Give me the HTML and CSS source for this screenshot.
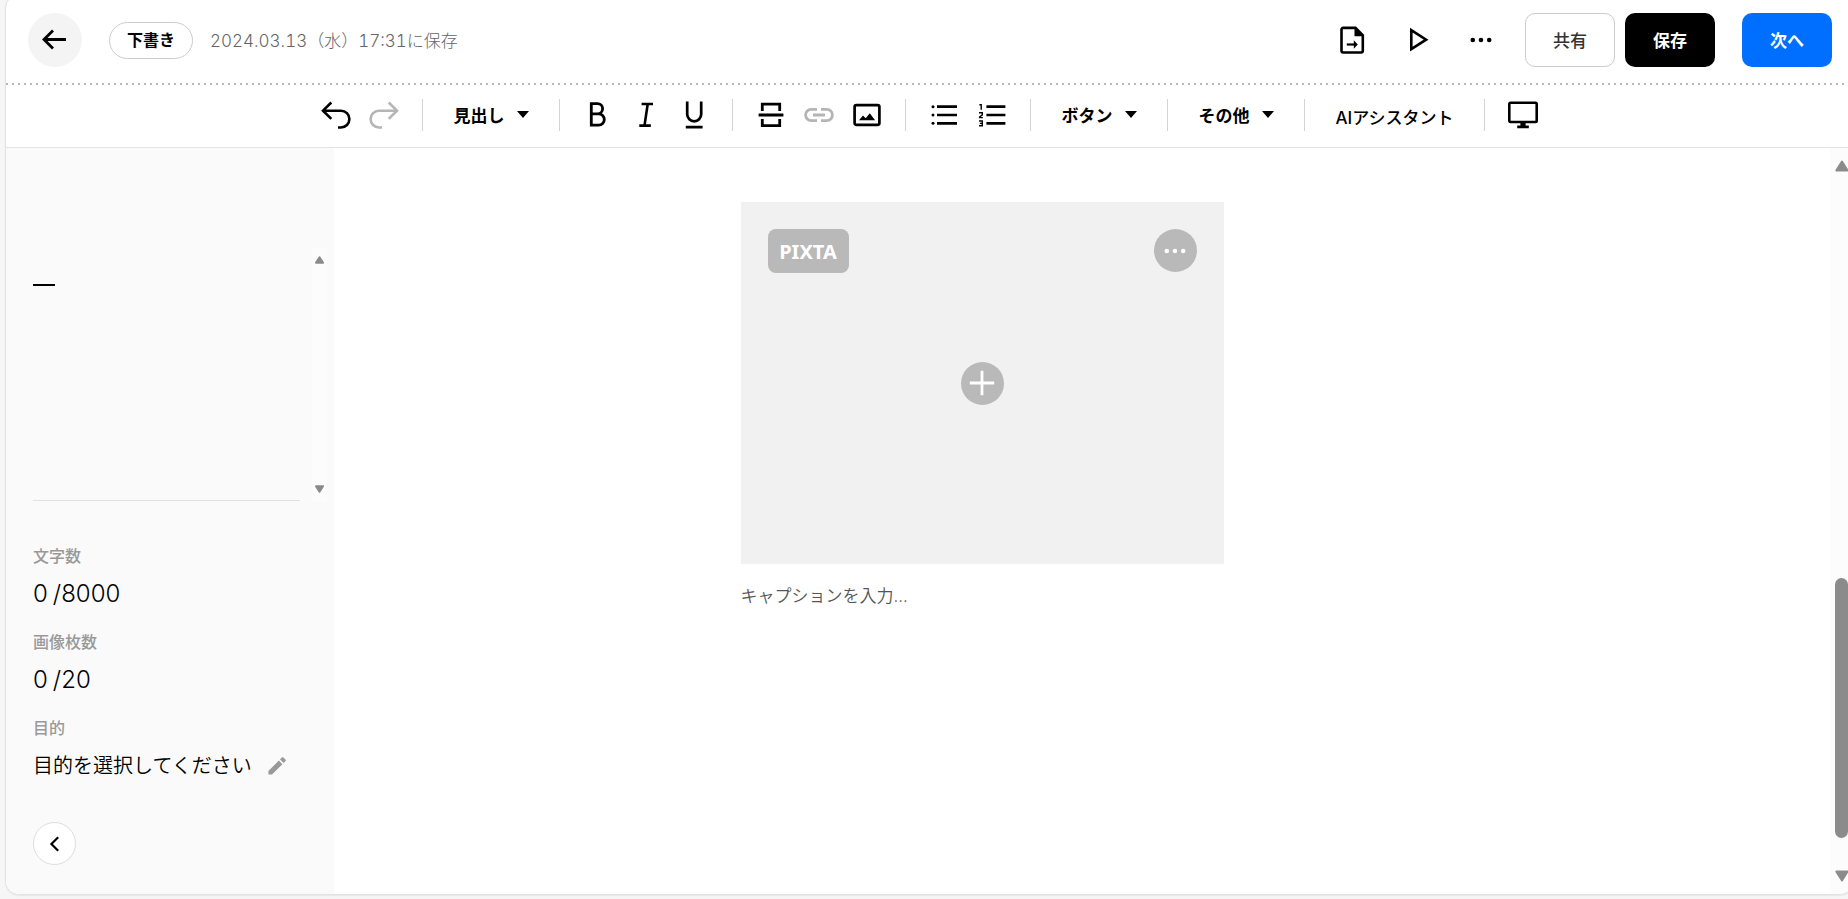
FILE: index.html
```html
<!DOCTYPE html>
<html lang="ja">
<head>
<meta charset="utf-8">
<meta name="viewport" content="width=device-width, initial-scale=1">
<title>記事の編集</title>
<link rel="stylesheet" href="styles.css">
</head>
<body>
<div class="shell">
  <header class="header">
    <button class="back" type="button" aria-label="戻る">
      <svg width="30" height="30" viewBox="0 0 30 30" fill="none" stroke="currentColor" stroke-width="2.8"><path d="M26 14.5H4.5M13 5.5l-9 9 9 9"/></svg>
    </button>
    <span class="status">下書き</span>
    <span class="saved">2024.03.13（水）17:31に保存</span>
    <div class="header-icons">
      <button class="icon" type="button" aria-label="書き出し">
        <svg width="30" height="30" viewBox="0 0 30 30"><path d="M6.2 2.9h12.3l7.3 7.3v15.6q0 1.7-1.7 1.7H6.2q-1.7 0-1.7-1.7V4.6q0-1.7 1.7-1.7z" fill="none" stroke="currentColor" stroke-width="2.6"/><path d="M17.5 2.5v8.8h8.8z" fill="currentColor"/><path d="M9.8 19.5h9" stroke="currentColor" stroke-width="2.2"/><path d="M16.8 15.2l4 4.3-4 4.3z" fill="currentColor"/></svg>
      </button>
      <button class="icon" type="button" aria-label="プレビュー">
        <svg width="30" height="30" viewBox="0 0 30 30" fill="none" stroke="currentColor" stroke-width="2.6"><path d="M8.3 5.2v19L23.1 14.7z"/></svg>
      </button>
      <button class="icon icon-dots" type="button" aria-label="メニュー">
        <svg width="24" height="30" viewBox="0 0 24 30" fill="currentColor"><circle cx="3.8" cy="15" r="2.3"/><circle cx="12" cy="15" r="2.3"/><circle cx="20.2" cy="15" r="2.3"/></svg>
      </button>
    </div>
    <div class="actions">
      <button class="btn btn-outline" type="button">共有</button>
      <button class="btn btn-dark" type="button">保存</button>
    </div>
    <button class="btn btn-blue" type="button">次へ</button>
  </header>

  <div class="toolbar" role="toolbar">
    <div class="group">
      <button class="icon" type="button" aria-label="元に戻す">
        <svg width="30" height="30" viewBox="0 0 30 30" fill="none" stroke="currentColor" stroke-width="2.6"><path d="M2 10.7h18a8.4 8.4 0 0 1 0 16.8h-3M10.3 2.5L2 10.7l8.3 8.2"/></svg>
      </button>
      <button class="icon muted" type="button" aria-label="やり直す">
        <svg width="30" height="30" viewBox="0 0 30 30" fill="none" stroke="currentColor" stroke-width="2.6"><path d="M28 10.7H10a8.4 8.4 0 0 0 0 16.8h3M19.7 2.5l8.3 8.2-8.3 8.2"/></svg>
      </button>
    </div>
    <div class="group group-text">
      <button class="menu" type="button">見出し<span class="caret"></span></button>
    </div>
    <div class="group">
      <button class="icon" type="button" aria-label="太字">
        <svg width="30" height="30" viewBox="0 0 30 30" fill="none" stroke="currentColor" stroke-width="2.8"><path d="M8.3 3.6h6.2a5 5 0 0 1 0 10.2H8.3zM8.3 13.8h7.3a5.6 5.6 0 0 1 0 11.4H8.3z"/></svg>
      </button>
      <button class="icon" type="button" aria-label="斜体">
        <svg width="30" height="30" viewBox="0 0 30 30" fill="none" stroke="currentColor" stroke-width="2.6"><path d="M10.6 4H22M8.3 25.6h11.5M16.7 4l-3.2 21.6"/></svg>
      </button>
      <button class="icon" type="button" aria-label="下線">
        <svg width="30" height="30" viewBox="0 0 30 30" fill="none" stroke="currentColor" stroke-width="2.7"><path d="M8.2 1.5v12.8a7 7 0 0 0 14 0V1.5M6.8 27.2h16.8"/></svg>
      </button>
    </div>
    <div class="group">
      <button class="icon" type="button" aria-label="区切り線">
        <svg width="30" height="30" viewBox="0 0 30 30" fill="none" stroke="currentColor" stroke-width="2.8"><path d="M6.3 11V4.2h17.4V11M2.6 15h24.8M6.3 19v6.6h17.4V19"/></svg>
      </button>
      <button class="icon muted" type="button" aria-label="リンク">
        <svg width="30" height="30" viewBox="0 0 30 30" fill="none" stroke="currentColor" stroke-width="2.8"><path d="M13 9.4H7.2a5.6 5.6 0 0 0 0 11.2H13M17 9.4h5.8a5.6 5.6 0 0 1 0 11.2H17M9 15h12"/></svg>
      </button>
      <button class="icon" type="button" aria-label="画像">
        <svg width="30" height="30" viewBox="0 0 30 30"><rect x="2.6" y="5.2" width="24.8" height="19.6" rx="1.8" fill="none" stroke="currentColor" stroke-width="2.7"/><path d="M7 20.2l4-4.7 2.7 2.8 4.1-5 5.2 6.9z" fill="currentColor"/></svg>
      </button>
    </div>
    <div class="group">
      <button class="icon" type="button" aria-label="箇条書き">
        <svg width="30" height="30" viewBox="0 0 30 30"><path d="M8 6.7h20M8 15h20M8 23.3h20" stroke="currentColor" stroke-width="2.7"/><circle cx="4" cy="6.7" r="1.5"/><circle cx="4" cy="15" r="1.5"/><circle cx="4" cy="23.3" r="1.5"/></svg>
      </button>
      <button class="icon" type="button" aria-label="番号付きリスト">
        <svg width="30" height="30" viewBox="0 0 30 30"><path d="M9.4 6.7h19M9.4 15h19M9.4 23.3h19" stroke="currentColor" stroke-width="2.7"/><path d="M2.4 4.8h1.8v5M2 12.8h3.3v2.1L2.6 17v.6h3.2M2 21h3.3v4.8H2M2.8 23.4h2.4" fill="none" stroke="currentColor" stroke-width="1.4"/></svg>
      </button>
    </div>
    <div class="group group-text">
      <button class="menu" type="button">ボタン<span class="caret"></span></button>
    </div>
    <div class="group group-text">
      <button class="menu" type="button">その他<span class="caret"></span></button>
    </div>
    <div class="group group-text">
      <button class="menu assistant" type="button">AIアシスタント</button>
    </div>
    <div class="group">
      <button class="icon" type="button" aria-label="画面表示">
        <svg width="30" height="30" viewBox="0 0 30 30"><rect x="1.3" y="2.8" width="27.4" height="19.2" rx="1.2" fill="none" stroke="currentColor" stroke-width="2.6"/><path d="M12.4 22h5.2v3.6h3.2v2.6H9.2v-2.6h3.2z" fill="currentColor"/></svg>
      </button>
    </div>
  </div>

  <div class="body">
    <aside class="sidebar">
      <div class="outline">
        <div class="outline-list"><span class="outline-mark"></span></div>
        <div class="mini-scroll">
          <svg width="9" height="8" viewBox="0 0 9 8"><path d="M4.5 1.2L8 6.8H1z"/></svg>
          <svg width="9" height="8" viewBox="0 0 9 8"><path d="M4.5 6.8L8 1.2H1z"/></svg>
        </div>
      </div>
      <dl class="stats">
        <div><dt>文字数</dt><dd><span>0</span><span>/8000</span></dd></div>
        <div><dt>画像枚数</dt><dd><span>0</span><span>/20</span></dd></div>
        <div>
          <dt>目的</dt>
          <dd class="purpose">目的を選択してください
            <button class="edit" type="button" aria-label="目的を編集">
              <svg width="18" height="18" viewBox="0 0 18 18" fill="currentColor"><path d="M.4 14L10.8 3.6l3.6 3.6L4 17.6H.4zM12 2.4L13.8.6q.8-.8 1.6 0l2 2q.8.8 0 1.6L15.6 6z"/></svg>
            </button>
          </dd>
        </div>
      </dl>
      <button class="collapse" type="button" aria-label="サイドバーを閉じる">
        <svg width="18" height="18" viewBox="0 0 18 18" fill="none" stroke="currentColor" stroke-width="2.2"><path d="M12.2 2.2L5.4 9l6.8 6.8"/></svg>
      </button>
    </aside>

    <main class="canvas">
      <div class="article">
        <figure class="figure">
          <div class="drop">
            <div class="drop-top">
              <button class="pixta" type="button">PIXTA</button>
              <button class="round" type="button" aria-label="画像メニュー">
                <svg width="24" height="24" viewBox="0 0 24 24" fill="currentColor"><circle cx="3.8" cy="12" r="2.3"/><circle cx="12" cy="12" r="2.3"/><circle cx="20.2" cy="12" r="2.3"/></svg>
              </button>
            </div>
            <button class="round" type="button" aria-label="画像を追加">
              <svg width="26" height="26" viewBox="0 0 26 26" fill="none" stroke="currentColor" stroke-width="2.8"><path d="M13 .8v24.4M.8 13h24.4"/></svg>
            </button>
          </div>
          <figcaption><input class="caption" type="text" placeholder="キャプションを入力..." aria-label="キャプション"></figcaption>
        </figure>
      </div>
    </main>

    <div class="scroll">
      <svg width="14" height="12" viewBox="0 0 14 12"><path d="M7 1.6L12.6 10.4H1.4z"/></svg>
      <div class="scroll-track"><div class="scroll-thumb"></div></div>
      <svg width="14" height="12" viewBox="0 0 14 12"><path d="M7 10.4L12.6 1.6H1.4z"/></svg>
    </div>
  </div>
</div>
</body>
</html>
```

FILE: styles.css
```css
* {
  box-sizing: border-box;
}

body {
  display: flex;
  min-height: 100vh;
  margin: 0;
  overflow: hidden;
  background: #f6f6f6;
  color: #000;
  font-family: Inter, "Noto Sans CJK JP", sans-serif;
  font-size: 16px;
}

button {
  padding: 0;
  border: 0;
  background: none;
  color: inherit;
  font: inherit;
}

svg {
  display: block;
}

.shell {
  display: flex;
  flex: 1;
  flex-direction: column;
  margin: -6px -6px 4px 5px;
  overflow: hidden;
  border: 1px solid #e2e2e2;
  border-radius: 14px;
  background: #fff;
  box-shadow: 0 1px 1px #e8e8e8;
}

/* Header */

.header {
  display: flex;
  align-items: center;
  padding: 18px 21px 18px 22px;
  background: repeating-linear-gradient(90deg, #b8b8b8 0 2px, transparent 2px 6px) left bottom / 100% 2px no-repeat;
}

.back {
  display: grid;
  place-items: center;
  width: 54px;
  height: 54px;
  border-radius: 50%;
  background: #f4f4f4;
}

.status {
  margin-left: 27px;
  padding: 0 17px;
  border: 1px solid #ccc;
  border-radius: 19px;
  font-weight: 700;
  line-height: 35px;
}

.saved {
  margin-left: 17px;
  padding-bottom: 2px;
  color: #666;
  font-size: 17px;
  font-weight: 300;
  font-variant-numeric: tabular-nums;
}

.header-icons {
  display: flex;
  gap: 36px;
  margin-left: auto;
}

.icon {
  display: grid;
  place-items: center;
  width: 30px;
  height: 30px;
}

.icon-dots {
  width: 24px;
}

.muted {
  color: #b5b5b5;
}

.actions {
  display: flex;
  gap: 10px;
  margin: 0 27px 0 32px;
}

.btn {
  width: 90px;
  height: 54px;
  padding-bottom: 2px;
  border-radius: 10px;
  font-size: 17px;
  font-weight: 700;
}

.btn-outline {
  border: 1px solid #ccc;
  color: #333;
  font-weight: 500;
}

.btn-dark {
  background: #000;
  color: #fff;
}

.btn-blue {
  background: #006fff;
  color: #fff;
}

/* Toolbar */

.toolbar {
  display: flex;
  justify-content: center;
  padding: 14px 0 16px;
  border-bottom: 1px solid #e4e4e4;
}

.group {
  display: flex;
  align-items: center;
  gap: 18px;
  height: 32px;
  padding: 0 23px;
}

.group + .group {
  border-left: 1px solid #d4d4d4;
}

.group + .group-text {
  padding: 0 30px;
}

.menu {
  display: flex;
  align-items: center;
  gap: 13px;
  padding-bottom: 2px;
  font-size: 17px;
  font-weight: 700;
}

.assistant {
  padding: 2px 0 0;
  font-weight: 500;
}

.caret {
  border: 6px solid transparent;
  border-top: 7px solid #000;
  border-bottom: 0;
}

/* Sidebar */

.body {
  display: flex;
  flex: 1;
}

.sidebar {
  width: 328px;
  padding: 100px 7px 28px 27px;
  background: #fafafa;
}

.outline {
  display: flex;
  height: 253px;
}

.outline-list {
  flex: 1;
  padding-top: 36px;
  border-bottom: 1px solid #e0e0e0;
}

.outline-mark {
  display: block;
  width: 22px;
  height: 2px;
  background: #000;
}

.mini-scroll {
  display: flex;
  flex-direction: column;
  align-items: center;
  justify-content: space-between;
  width: 15px;
  margin-left: 12px;
  padding: 8px 0;
  background: #fcfcfc;
}

.mini-scroll svg,
.scroll svg {
  fill: #8b8b8b;
  stroke: #8b8b8b;
  stroke-width: 2;
  stroke-linejoin: round;
}

.stats {
  display: grid;
  gap: 18px;
  margin: 43px 0 38px;
}

.stats dt {
  margin-bottom: 8px;
  color: #999;
  font-weight: 500;
  line-height: 24px;
}

.stats dd {
  display: flex;
  gap: 5px;
  margin: 0;
  font-size: 24px;
  font-weight: 300;
  line-height: 36px;
}

.stats .purpose {
  align-items: center;
  gap: 16px;
  font-size: 20px;
  font-weight: 350;
}

.edit {
  color: #999;
}

.collapse {
  display: grid;
  place-items: center;
  width: 43px;
  height: 43px;
  border: 1px solid #ddd;
  border-radius: 50%;
  background: #fff;
}

/* Canvas */

.canvas {
  flex: 1;
  padding-top: 54px;
}

.article {
  max-width: 683px;
  margin: 0 auto;
}

.figure {
  width: 483px;
  margin: 0;
}

.drop {
  display: grid;
  grid-template-rows: 1fr auto 1fr;
  justify-items: center;
  aspect-ratio: 4 / 3;
  padding: 27px;
  background: #f1f1f1;
}

.drop-top {
  display: flex;
  justify-content: space-between;
  justify-self: stretch;
}

.pixta {
  width: 81px;
  height: 44px;
  border-radius: 8px;
  background: #b9b9b9;
  color: #fff;
  font-family: "Noto Sans", sans-serif;
  font-size: 20px;
  font-weight: 700;
}

.round {
  display: grid;
  place-items: center;
  width: 43px;
  height: 43px;
  border-radius: 50%;
  background: #b9b9b9;
  color: #fff;
}

.caption {
  width: 100%;
  height: 32px;
  margin-top: 16px;
  padding: 0;
  border: 0;
  background: none;
  font: inherit;
  font-size: 17px;
  font-weight: 350;
}

.caption::placeholder {
  color: #555;
  opacity: 1;
}

.scroll {
  display: flex;
  flex-direction: column;
  align-items: center;
  width: 23px;
  padding: 12px 0;
  background: #fcfcfc;
}

.scroll-track {
  display: flex;
  flex: 1;
  align-items: flex-end;
  padding: 32px 0;
}

.scroll-thumb {
  width: 13px;
  height: 41%;
  border-radius: 7px;
  background: #8b8b8b;
}
```
